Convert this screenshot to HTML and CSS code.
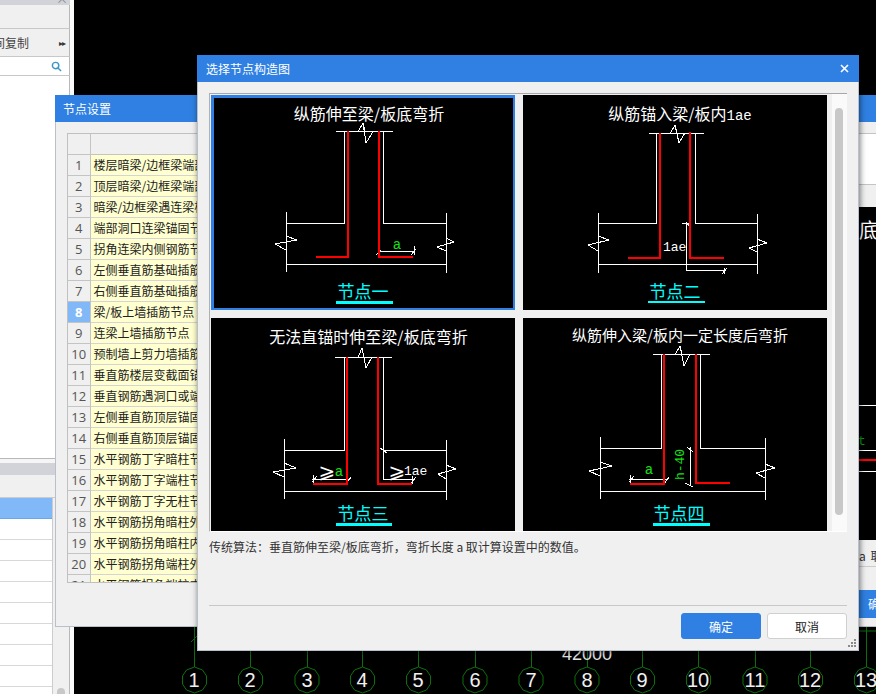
FILE: index.html
```html
<!DOCTYPE html>
<html lang="zh-CN">
<head>
<meta charset="utf-8">
<title>选择节点构造图</title>
<link rel="stylesheet" href="styles.css">
</head>
<body>
<aside class="side">
  <div class="side-top"><span class="side-x">×</span></div>
  <div class="side-blank"></div>
  <div class="side-tool"><span class="side-tool-text">空间复制</span><span class="side-more">▸▸</span></div>
  <div class="side-search">
    <svg class="search-icon" viewBox="0 0 12 12"><circle cx="5" cy="5" r="3.5"/><path d="M7.6 7.6 11 11"/></svg>
  </div>
  <div class="side-white"></div>
  <div class="side-head"></div>
  <div class="side-sub"></div>
  <div class="side-listwrap">
    <ul class="side-list">
      <li class="sel"></li><li></li><li></li><li></li><li></li><li></li><li></li><li></li><li></li>
    </ul>
    <div class="side-scroll"><span class="side-thumb"></span></div>
  </div>
</aside>

<svg class="axis" viewBox="0 0 876 694">
  <defs>
    <polygon id="bub" points="0,-13 8,-10 12,-4 12,4 8,10 0,13 -8,10 -12,4 -12,-4 -8,-10"/>
  </defs>
  <path class="axis-line" d="M194.500 627V667M250.500 640V667M307.500 640V667M362.500 640V667M418.500 640V667M475.500 640V667M531.500 640V667M587.500 640V667M642.500 640V667M698.500 640V667M755.500 640V667M810.500 640V667M866.500 627V667M859 631H876M191 642L197 636"/>
  <use href="#bub" x="194.500" y="680" class="bubble"/><text x="194" y="687" class="axis-num">1</text>
  <use href="#bub" x="250.500" y="680" class="bubble"/><text x="250" y="687" class="axis-num">2</text>
  <use href="#bub" x="307" y="680" class="bubble"/><text x="307" y="687" class="axis-num">3</text>
  <use href="#bub" x="362.500" y="680" class="bubble"/><text x="362" y="687" class="axis-num">4</text>
  <use href="#bub" x="418.500" y="680" class="bubble"/><text x="418" y="687" class="axis-num">5</text>
  <use href="#bub" x="475" y="680" class="bubble"/><text x="475" y="687" class="axis-num">6</text>
  <use href="#bub" x="531" y="680" class="bubble"/><text x="531" y="687" class="axis-num">7</text>
  <use href="#bub" x="587" y="680" class="bubble"/><text x="587" y="687" class="axis-num">8</text>
  <use href="#bub" x="642.500" y="680" class="bubble"/><text x="642" y="687" class="axis-num">9</text>
  <use href="#bub" x="698.500" y="680" class="bubble"/><text x="698" y="687" class="axis-num">10</text>
  <use href="#bub" x="755" y="680" class="bubble"/><text x="755" y="687" class="axis-num">11</text>
  <use href="#bub" x="810.500" y="680" class="bubble"/><text x="810" y="687" class="axis-num">12</text>
  <use href="#bub" x="866.500" y="680" class="bubble"/><text x="866" y="687" class="axis-num">13</text>
  <text x="587" y="660" class="axis-dim">42000</text>
</svg>

<section class="win-node">
  <header class="win-title node-title">节点设置</header>
  <div class="node-body">
    <div class="node-left">
      <div class="table-wrap">
        <table class="node-table">
          <tbody>
            <tr class="tr-head"><th></th><td></td></tr>
            <tr><th>1</th><td>楼层暗梁/边框梁端部节点</td></tr>
            <tr><th>2</th><td>顶层暗梁/边框梁端部节点</td></tr>
            <tr><th>3</th><td>暗梁/边框梁遇连梁构造</td></tr>
            <tr><th>4</th><td>端部洞口连梁锚固节点</td></tr>
            <tr><th>5</th><td>拐角连梁内侧钢筋节点</td></tr>
            <tr><th>6</th><td>左侧垂直筋基础插筋节点</td></tr>
            <tr><th>7</th><td>右侧垂直筋基础插筋节点</td></tr>
            <tr><th class="th-sel">8</th><td>梁/板上墙插筋节点</td></tr>
            <tr><th>9</th><td>连梁上墙插筋节点</td></tr>
            <tr><th>10</th><td>预制墙上剪力墙插筋节点</td></tr>
            <tr><th>11</th><td>垂直筋楼层变截面锚固</td></tr>
            <tr><th>12</th><td>垂直钢筋遇洞口或端部</td></tr>
            <tr><th>13</th><td>左侧垂直筋顶层锚固节点</td></tr>
            <tr><th>14</th><td>右侧垂直筋顶层锚固节点</td></tr>
            <tr><th>15</th><td>水平钢筋丁字暗柱节点</td></tr>
            <tr><th>16</th><td>水平钢筋丁字端柱节点</td></tr>
            <tr><th>17</th><td>水平钢筋丁字无柱节点</td></tr>
            <tr><th>18</th><td>水平钢筋拐角暗柱外侧</td></tr>
            <tr><th>19</th><td>水平钢筋拐角暗柱内侧</td></tr>
            <tr><th>20</th><td>水平钢筋拐角端柱外侧</td></tr>
            <tr><th>21</th><td>水平钢筋拐角端柱内侧</td></tr>
          </tbody>
        </table>
      </div>
    </div>
    <div class="node-right">
      <div class="nr-gap"></div>
      <div class="nr-white"></div>
      <div class="nr-light"></div>
      <svg class="nr-preview" viewBox="859 207 17 333">
        <text x="859" y="238" class="pv-char">底</text>
        <text x="858" y="445" class="pv-green">t</text>
        <path class="cad" d="M859 405.500H876M859 450.500H876M859 471.500H876"/>
        <path class="rebar" d="M859 460H876"/>
      </svg>
      <div class="nr-note"><span class="nr-note-text">a 取计算设置</span></div>
      <div class="nr-btn"><span>确定</span></div>
      <div class="nr-end"></div>
    </div>
  </div>
</section>

<section class="dialog">
  <header class="win-title dlg-title">
    <span>选择节点构造图</span>
    <svg class="close" viewBox="0 0 9 9"><path d="M1 1 8 8M8 1 1 8"/></svg>
  </header>
  <div class="dlg-body">
    <div class="scroll-area">
      <div class="cards">
        <div class="card card-sel">
          <svg class="dgm" viewBox="214 98 299 210">
            <text x="369" y="120" class="t-title">纵筋伸至梁/板底弯折</text>
            <path class="cad" d="M336 131.500H393M358 131.500 363 123 366 143 373 131.500M363 123 365 131M344.500 131V223.500H286.500M383.500 131V223.500H446.500M286.500 212V272M446.500 213V273M286.500 264.500H446.500M286 236 297 240 275 244 286 250M446 238 454 242 437 247 446 251M378 251.500H414M376 255 381 250M411 255 416 249M414.500 246V255"/>
            <path class="rebar" d="M348 131V257M316 257H349M379 131V257H413"/>
            <text x="397" y="249" class="t-green">a</text>
            <text x="363" y="298" class="t-label">节点一</text>
            <rect class="uline" x="336" y="301" width="57" height="3"/>
          </svg>
        </div>
        <div class="card">
          <svg class="dgm" viewBox="523 95 304 215">
            <text x="680" y="120" class="t-title">纵筋锚入梁/板内<tspan class="t-mono">1ae</tspan></text>
            <path class="cad" d="M649 133.500H704M670 133.500 675 125 679 143 685 133M675 125 677 133M656.500 133V223.500H598.500M695.500 133V223.500H757.500M598.500 213V273M757.500 214V274M598.500 264.500H757.500M598 236 609 240 588 245 598 251M757 239 767 243 749 248 757 252M686.500 222V270.500H725M682 223.500H690M686 222 690 227M722 274 727 268M724.500 268V274"/>
            <path class="rebar" d="M660 133V258H628M690 132V258H724"/>
            <text x="663" y="251" class="t-cadmono">1ae</text>
            <text x="675" y="298" class="t-label">节点二</text>
            <rect class="uline" x="648" y="301" width="57" height="2"/>
          </svg>
        </div>
        <div class="card">
          <svg class="dgm" viewBox="211 318 304 213">
            <text x="368.500" y="343" class="t-title">无法直锚时伸至梁/板底弯折</text>
            <path class="cad" d="M335 357.500H392M358 357.500 362 348 366 368 372 357M362 348 364 357M344.500 357V450.500H284.500M383.500 357V479.500H412M383.500 450.500H446.500M284.500 439V499M446.500 440V500M284.500 491.500H446.500M284 463 296 468 273 472 284 477M446 465 456 469 438 474 446 479M312 479.500H349M312 482 317 476M346 484 351 477M313.500 475V484M380 448 387 453M411 483 416 477M412.500 476V484"/>
            <path class="rebar" d="M347 357V484H313M378 357V484H412"/>
            <text x="327" y="478" class="t-ge">⩾</text>
            <text x="339" y="476" class="t-green">a</text>
            <text x="397" y="478" class="t-ge">⩾</text>
            <text x="404" y="475" class="t-cadmono">1ae</text>
            <text x="363" y="520" class="t-label">节点三</text>
            <rect class="uline" x="336" y="523" width="56" height="3"/>
          </svg>
        </div>
        <div class="card">
          <svg class="dgm" viewBox="523 318 304 213">
            <text x="680" y="341" class="t-title t-small">纵筋伸入梁/板内一定长度后弯折</text>
            <path class="cad" d="M653 354.500H710M675 354.500 680 346 684 366 690 354M680 346 682 354M661.500 354V448.500H600.500M700.500 354V448.500H765.500M600.500 437V499M765.500 438V500M600.500 491.500H765.500M600 462 612 466 589 471 600 476M765 464 775 468 756 473 765 478M629 479.500H667M629 482 634 476M664 484 669 477M630.500 475V484M690.500 447V485M687 447 693 452M685 483 693 487"/>
            <path class="rebar" d="M664 354V484H630M696 354V483H730"/>
            <text x="649" y="474" class="t-green">a</text>
            <text x="680" y="468" class="t-green t-rot">h-40</text>
            <text x="679" y="520" class="t-label">节点四</text>
            <rect class="uline" x="653" y="523" width="57" height="3"/>
          </svg>
        </div>
      </div>
      <div class="sb"><span class="sb-thumb"></span></div>
    </div>
    <p class="note">传统算法：垂直筋伸至梁/板底弯折，弯折长度 a 取计算设置中的数值。</p>
  </div>
  <footer class="dlg-foot">
    <button class="btn btn-ok">确定</button>
    <button class="btn btn-no">取消</button>
  </footer>
  <svg class="grip" viewBox="0 0 8 8"><path d="M6 0h2v2H6zM3 3h2v2H3zM6 3h2v2H6zM0 6h2v2H0zM3 6h2v2H3zM6 6h2v2H6z"/></svg>
</section>
</body>
</html>
```

FILE: styles.css
```css
* { box-sizing: border-box; }
html, body { margin: 0; padding: 0; }
body {
  width: 876px;
  height: 694px;
  position: relative;
  overflow: hidden;
  background: #000;
  font-family: "Noto Sans CJK SC", "Liberation Sans", sans-serif;
  font-size: 12px;
  color: #222;
}

/* left dock */
.side {
  position: absolute;
  left: 0;
  top: 0;
  width: 74px;
  height: 694px;
  display: flex;
  flex-direction: column;
  background: #fff;
  border-right: 4px solid #fafafa;
}
.side-top { height: 5px; background: #d2d3d8; position: relative; overflow: hidden; }
.side-x { position: absolute; left: 56px; top: -7px; font-size: 12px; line-height: 12px; color: #888; }
.side-blank { height: 24px; background: #f0f0f0; border-bottom: 1px solid #c8c8c8; border-right: 1px solid #b8b8b8; }
.side-tool {
  height: 28px;
  background: #f0f0f0;
  border-bottom: 1px solid #c8c8c8;
  border-right: 1px solid #b8b8b8;
  display: flex;
  align-items: center;
  justify-content: space-between;
  overflow: hidden;
  padding-right: 4px;
  font-size: 12px;
  color: #444;
}
.side-tool-text { margin-left: -19px; white-space: nowrap; }
.side-more { font-size: 8px; color: #333; letter-spacing: -1px; }
.side-search { height: 19px; background: #fff; border-bottom: 1px solid #c8c8c8; border-right: 1px solid #b8b8b8; position: relative; }
.search-icon { position: absolute; left: 51px; top: 4px; width: 11px; height: 11px; fill: none; stroke: #3c98c8; stroke-width: 1.6; }
.side-white { height: 383px; background: #fff; border-bottom: 1px solid #b8b8b8; border-right: 1px solid #b8b8b8; }
.side-head { height: 16px; flex: none; background: #d2d3d8; border-top: 4px solid #f5f5f5; }
.side-sub { height: 23px; flex: none; background: #f0f0f0; border-bottom: 1px solid #ccc; border-right: 1px solid #b8b8b8; }
.side-listwrap { flex: 1; display: flex; border-right: 1px solid #b8b8b8; min-height: 0; }
.side-list { list-style: none; margin: 0; padding: 0; width: 53px; border-right: 1px solid #ccc; }
.side-list li { height: 21px; border-bottom: 1px solid #d8d8d8; background: #fff; }
.side-list li.sel { background: #80b8f8; border-bottom-color: #6aa8ee; }
.side-scroll { flex: 1; background: #f0f0f0; display: flex; justify-content: center; align-items: flex-end; }
.side-thumb { width: 8px; height: 6px; border-radius: 4px 4px 0 0; background: #c8c8c8; }

/* bottom axes */
.axis { position: absolute; left: 0; top: 0; width: 876px; height: 694px; }
.axis-line { stroke: #0b700b; stroke-width: 1; fill: none; }
.bubble { fill: none; stroke: #0b700b; stroke-width: 1; }
.axis-num {
  fill: #f0f0f0;
  font-family: "Liberation Sans Narrow", "Liberation Sans", sans-serif;
  font-size: 20px;
  text-anchor: middle;
}
.axis-dim { fill: #e4e4e4; font-family: "Liberation Sans", sans-serif; font-size: 18px; text-anchor: middle; }

/* shared title */
.win-title {
  height: 27px;
  flex: none;
  background: #2f80e2;
  color: #fff;
  font-size: 12px;
  line-height: 27px;
  padding-left: 9px;
}
.node-title { padding-left: 8px; margin-left: -1px; }

/* node settings window */
.win-node {
  position: absolute;
  left: 55px;
  top: 95px;
  width: 840px;
  height: 532px;
  display: flex;
  flex-direction: column;
  background: #f0f0f0;
  border-left: 1px solid #b8c0cc;
  border-bottom: 1px solid #b8c0cc;
}
.node-body { flex: 1; display: flex; min-height: 0; }
.node-left { width: 803px; flex: none; padding: 11px 0 0 11px; }
.table-wrap { height: 450px; overflow: hidden; border: 1px solid #c0c0c0; width: 780px; }
.node-table { border-collapse: collapse; table-layout: fixed; width: 100%; }
.node-table th {
  width: 22px;
  height: 21px;
  padding: 0;
  background: #f0f0f0;
  border-right: 1px solid #c4c4c4;
  border-bottom: 1px solid #c4c4c4;
  font: 400 13px "Open Sans", "Liberation Sans", sans-serif;
  color: #555;
  text-align: center;
}
.node-table td {
  height: 21px;
  padding: 0 0 0 3px;
  background: #ffffcf;
  border-bottom: 1px solid #d4d4d4;
  color: #222;
  white-space: nowrap;
  overflow: hidden;
  font-size: 12px;
  line-height: 20px;
}
.node-table .tr-head th, .node-table .tr-head td { height: 20px; }
.node-table .tr-head td { background: #f0f0f0; border-bottom-color: #c4c4c4; }
.node-table th.th-sel { background: #80b8f8; color: #fff; font-weight: 700; }

.node-right { flex: 1; display: flex; flex-direction: column; }
.nr-gap { height: 11px; flex: none; }
.nr-white { height: 52px; flex: none; background: #fff; border-top: 1px solid #c4c4c4; border-bottom: 1px solid #c4c4c4; }
.nr-light { height: 22px; flex: none; }
.nr-preview { display: block; width: 17px; height: 333px; flex: none; background: #000; overflow: hidden; }
.pv-char { fill: #fff; font-size: 20px; }
.pv-green { fill: #0c9a0c; font-family: "Liberation Mono", monospace; font-size: 13px; }
.nr-note {
  height: 50px;
  flex: none;
  padding-top: 7px;
  white-space: nowrap;
  overflow: hidden;
  font-size: 12px;
  color: #333;
  background: linear-gradient(#f0f0f0 26px, #ccc 26px, #ccc 27px, #f0f0f0 27px);
}
.nr-note-text { display: block; width: 80px; word-spacing: 2px; }
.nr-btn { height: 28px; flex: none; background: #2f80e2; color: #fff; padding-left: 9px; line-height: 28px; white-space: nowrap; overflow: hidden; }
.nr-end { flex: 1; }

/* main dialog */
.dialog {
  position: absolute;
  left: 197px;
  top: 55px;
  width: 662px;
  height: 596px;
  display: flex;
  flex-direction: column;
  background: #f0f0f0;
  border-right: 1px solid #b8c0cc;
  border-bottom: 1px solid #b8c0cc;
  border-left: 1px solid #b8c0cc;
  box-shadow: 1px 1px 6px rgba(0, 0, 0, .55);
}
.dlg-title { display: flex; align-items: center; justify-content: space-between; padding: 0 10px 0 9px; margin: 0 -1px; }
.close { width: 9px; height: 9px; fill: none; stroke: #fff; stroke-width: 1.6; }
.dlg-body { flex: 1; padding: 11px 11px 0; min-height: 0; }
.scroll-area {
  display: flex;
  height: 439px;
  background: #f0f0f0;
  border-top: 1px solid #a8a8a8;
  border-left: 1px solid #b0b0b0;
  border-bottom: 1px solid #fff;
  padding: 1px 0 0 1px;
}
.cards {
  display: grid;
  grid-template-columns: 304px 304px;
  grid-template-rows: 215px 213px;
  gap: 8px;
  flex: none;
}
.card { background: #000; overflow: hidden; }
.card-sel { border: solid #2f80e2; border-width: 3px 2px 2px 3px; }
.dgm { display: block; width: 100%; height: 100%; }
.sb {
  width: 15px;
  margin: -1px 0 0 5px;
  flex: none;
  background: #fafafa;
  padding: 14px 0 0 3px;
}
.sb-thumb { display: block; width: 8px; height: 407px; border-radius: 4px; background: #c8c8c8; }

.cad { fill: none; stroke: #fff; stroke-width: 1; shape-rendering: crispEdges; }
.rebar { fill: none; stroke: #f00; stroke-width: 2; shape-rendering: crispEdges; }
.uline { fill: #00ffff; }
.t-title { fill: #fff; font-size: 16px; text-anchor: middle; }
.t-small { font-size: 15px; }
.t-mono { font-family: "Liberation Mono", monospace; font-size: 14px; }
.t-cadmono { fill: #fff; font-family: "Liberation Mono", monospace; font-size: 13px; }
.t-green { fill: #16e016; font-family: "Liberation Mono", monospace; font-size: 14px; text-anchor: middle; }
.t-rot { rotate: -90deg; transform-box: fill-box; transform-origin: center; font-size: 13px; }
.t-ge { fill: #fff; font-family: "DejaVu Sans", sans-serif; font-size: 20px; text-anchor: middle; }
.t-label { fill: #00ffff; font-size: 17px; text-anchor: middle; }

.note { margin: 0; padding: 6px 0 0 0; font-size: 12px; line-height: 18px; color: #333; white-space: nowrap; }

.dlg-foot {
  height: 45px;
  margin: 0 11px;
  flex: none;
  border-top: 1px solid #c8c8c8;
  display: flex;
  justify-content: flex-end;
  align-items: flex-start;
  gap: 6px;
  padding-top: 7px;
}
.btn {
  width: 80px;
  height: 26px;
  padding: 0;
  border-radius: 3px;
  font-family: inherit;
  font-size: 12px;
}
.btn-ok { background: #2f80e2; border: 1px solid #2f80e2; color: #fff; }
.btn-no { background: #fff; border: 1px solid #d0d0d0; color: #222; }
.grip { position: absolute; right: 2px; bottom: 3px; width: 8px; height: 8px; fill: #8a8a8a; }
```
